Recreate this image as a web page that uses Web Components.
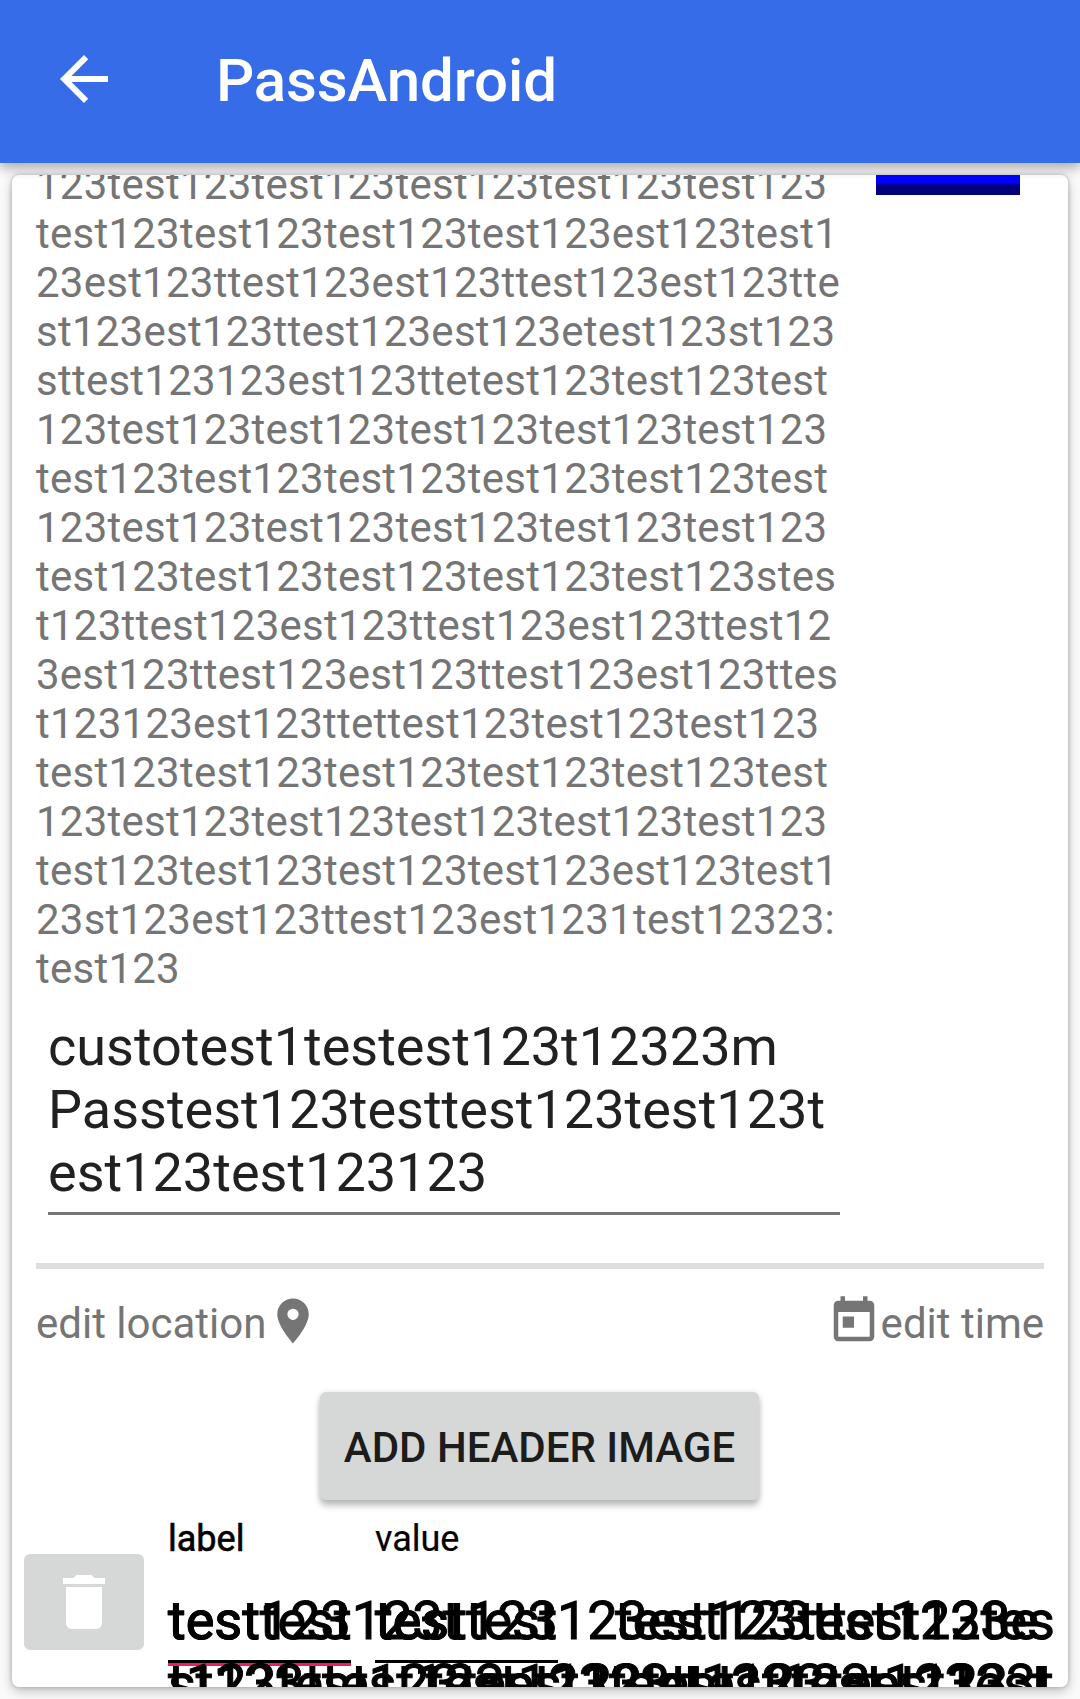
<!DOCTYPE html>
<html lang="en">
<head>
<meta charset="utf-8">
<title>PassAndroid</title>
<style>
html,body{margin:0;height:1699px;overflow:hidden;background:#fafafa;font-family:Roboto,"Liberation Sans",sans-serif}
</style>
</head>
<body>
<pass-editor></pass-editor>
<script>
const define = (name, html) => customElements.define(name, class extends HTMLElement {
  constructor() {
    super();
    this.attachShadow({mode: 'open'}).innerHTML = html;
  }
});

define('app-bar', `
<style>
:host{display:flex;align-items:center;height:163px;background:#366ce8;color:#fff;box-shadow:0 2px 14px rgba(0,0,0,.26),0 7px 9px rgba(0,0,0,.12);position:relative;z-index:1;box-sizing:border-box;padding-left:48px}
svg{width:72px;height:72px;margin-top:-5px}
h1{margin:-1px 0 0 96px;font-size:60px;font-weight:500;line-height:70px;letter-spacing:-.12px}
</style>
<svg viewBox="0 0 24 24" fill="#fff"><path d="M20 11H7.83l5.59-5.59L12 4l-8 8 8 8 1.41-1.41L7.83 13H20z"/></svg>
<h1><slot></slot></h1>`);

define('pass-summary', `
<style>
:host{display:flex;justify-content:space-between;padding:0 48px 0 24px}
.main{width:804px;margin-top:-15px}
.desc{font-size:42px;line-height:49px;letter-spacing:.245px;color:#757575;white-space:pre}
.swatch{width:144px;height:20px;background:linear-gradient(#00f 8px,#00007f 10px)}
.edit{margin:22px 0 0 12px;width:792px;height:200px;box-sizing:border-box;border-bottom:3px solid #757575;font-size:54px;line-height:63px;color:#212121;white-space:pre}
</style>
<div class="main">
<div class="desc"><slot></slot></div>
<div class="edit"><slot name="title"></slot></div>
</div>
<div class="swatch"></div>`);

define('edit-links', `
<style>
:host{display:flex;justify-content:space-between;margin:48px 24px 0;border-top:6px solid #dfdfdf;padding-top:24px;color:#757575;font-size:42px;line-height:62px;height:60px}
span{display:flex}
svg{width:54px;height:54px;margin-top:1px;fill:#757575}
</style>
<span>edit location<svg viewBox="0 0 24 24"><path d="M12 2C8.13 2 5 5.13 5 9c0 5.25 7 13 7 13s7-7.75 7-13c0-3.87-3.13-7-7-7zm0 9.500a2.5 2.500 0 1 1 0-5 2.500 2.500 0 0 1 0 5z"/></svg></span>
<span><svg viewBox="0 0 24 24"><path d="M19 3h-1V1h-2v2H8V1H6v2H5c-1.110 0-2 .9-2 2v14c0 1.100.89 2 2 2h14c1.100 0 2-.9 2-2V5c0-1.100-.9-2-2-2zm0 16H5V8h14v11zM7 10h5v5H7z"/></svg>edit time</span>`);

define('raised-button', `
<style>
:host{display:block;width:439px;height:108px;margin:39px auto 0 308px;border-radius:6px;background:#d6d8d7;box-shadow:0 6px 6px rgba(0,0,0,.22),0 1px 6px rgba(0,0,0,.14);font-size:42px;font-weight:500;line-height:112px;text-align:center;color:#1c1c1c;white-space:nowrap}
</style><slot></slot>`);

define('delete-button', `
<style>
:host{display:flex;align-items:center;justify-content:center;width:120px;height:96px;margin-top:42px;border-radius:6px;background:#d6d8d7}
svg{width:72px;height:72px}
</style>
<svg viewBox="0 0 24 24" fill="#fff"><path d="M6 19c0 1.100.9 2 2 2h8c1.100 0 2-.9 2-2V7H6v12zM19 4h-3.500l-1-1h-5l-1 1H5v2h14V4z"/></svg>`);

/* Field whose text overflows; repeated renders of a line stack in one grid cell. */
define('ghost-field', `
<style>
:host{display:block;width:183px;color:#000}
label{display:block;padding-top:6px;font-size:36px;line-height:42px;-webkit-text-stroke:var(--weight,.2px) #000}
.stack{display:grid;grid-template:63px 63px/183px;margin-top:29px;height:68px;white-space:pre;font-size:54px;line-height:63px;-webkit-text-stroke:1px #000}
.stack ::slotted(div){grid-area:1/1}
.stack ::slotted(.next){grid-area:2/1}
.line{height:3px;background:#000;border-bottom:3px solid var(--accent,transparent);background-clip:padding-box;margin-top:3px}
</style>
<label><slot name="label"></slot></label>
<div class="stack"><slot></slot></div>
<div class="line"></div>`);

define('pass-editor', `
<style>
:host{display:block}
main{margin:12px 12px 0;height:1512px;border-radius:7px;background:#fff;box-shadow:0 4px 12px rgba(0,0,0,.24),0 0 4px rgba(0,0,0,.22)}
.clip{height:1512px;overflow:hidden;border-radius:7px}
.row{display:flex;padding:12px 0 0 12px}
ghost-field{margin-left:24px}
</style>
<app-bar>PassAndroid</app-bar>
<main><div class="clip">
<pass-summary>123test123test123test123test123test123
test123test123test123test123est123test1
23est123ttest123est123ttest123est123tte
st123est123ttest123est123etest123st123
sttest123123est123ttetest123test123test
123test123test123test123test123test123
test123test123test123test123test123test
123test123test123test123test123test123
test123test123test123test123test123stes
t123ttest123est123ttest123est123ttest12
3est123ttest123est123ttest123est123ttes
t123123est123ttettest123test123test123
test123test123test123test123test123test
123test123test123test123test123test123
test123test123test123test123est123test1
23st123est123ttest123est1231test12323:
test123<span slot="title">custotest1testest123t12323m
Passtest123testtest123test123t
est123test123123</span></pass-summary>
<edit-links></edit-links>
<raised-button>ADD HEADER IMAGE</raised-button>
<div class="row">
<delete-button></delete-button>
<ghost-field style="--accent:#e91e63;--weight:.6px"><span slot="label">label</span>
<div>testtest123t</div>
<div>test123</div>
<div class="next">t123test123test123test123test123</div>
<div class="next">st123ttest123est123ttest123est123t</div>
</ghost-field>
<ghost-field><span slot="label">value</span>
<div style="letter-spacing:-.2px">testtest123est123ttest123e</div>
<div>test123</div>
<div style="padding-left:240px">test123test123tes</div>
<div class="next" style="padding-left:51px">test123test123test123est</div>
</ghost-field>
</div>
</div></main>`);
</script>
</body>
</html>
